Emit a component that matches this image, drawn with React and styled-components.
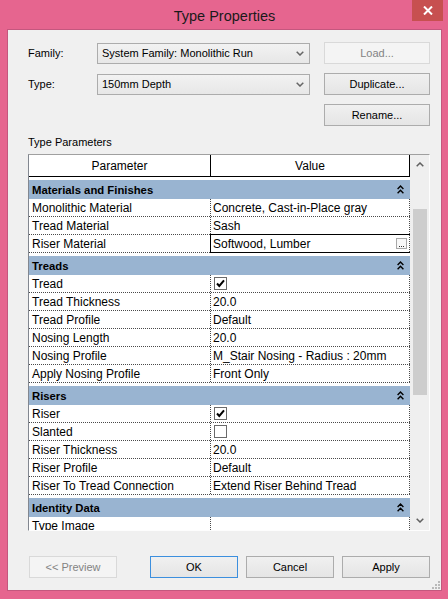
import React from 'react';
import styled, { createGlobalStyle } from 'styled-components';

const GlobalStyle = createGlobalStyle`
  html, body {
    margin: 0;
    padding: 0;
    overflow: hidden;
  }
  body {
    font-family: "Liberation Sans", Arial, sans-serif;
    color: #000;
  }
`;

var Window = styled.div`
  width: 448px;
  height: 599px;
  box-sizing: border-box;
  background: #e6658f;
  padding: 0 6px 8px 7px;
  display: flex;
  flex-direction: column;
`;

var TitleBar = styled.div`
  position: relative;
  height: 30px;
  padding-top: 2px;
  box-sizing: border-box;
  display: flex;
  align-items: center;
  justify-content: center;
  font-size: 14.5px;
  color: #1a1a1a;
`;

var CloseButton = styled.div`
  position: absolute;
  top: 0;
  right: -1px;
  width: 31px;
  height: 21px;
  background: #c75050;
  display: flex;
  align-items: center;
  justify-content: center;
`;

var Content = styled.div`
  position: relative;
  flex: 1;
  background: #f0f0f0;
  border: 1px solid #c4577e;
  padding: 12px 11px 12px 20px;
  display: flex;
  flex-direction: column;
  font-size: 11px;
`;

var TopGrid = styled.div`
  display: grid;
  grid-template-columns: 55px 213px 106px;
  grid-auto-rows: 22px;
  column-gap: 14px;
  row-gap: 9px;
  align-items: center;
`;

var Label = styled.div`
  font-size: 11px;
`;

var Select = styled.div`
  height: 21px;
  box-sizing: border-box;
  border: 1px solid #acacac;
  background: linear-gradient(#f2f2f2, #e7e7e7);
  display: flex;
  align-items: center;
  justify-content: space-between;
  padding: 0 5px 0 4px;
`;

var Button = styled.div`
  height: 22px;
  width: ${p => p.$width || 'auto'};
  box-sizing: border-box;
  border: 1px solid ${p => (p.$disabled ? '#d9d9d9' : p.$primary ? '#3c8fde' : '#acacac')};
  background: ${p => (p.$disabled ? '#f4f4f4' : 'linear-gradient(#f0f0f0, #e5e5e5)')};
  color: ${p => (p.$disabled ? '#838383' : '#000')};
  display: flex;
  align-items: center;
  justify-content: center;
  font-size: 11px;
  grid-column: ${p => p.$col || 'auto'};
`;

var SectionLabel = styled.div`
  margin-top: 9px;
  height: 14px;
  line-height: 14px;
  font-size: 11px;
`;

var Table = styled.div`
  margin-top: 5px;
  width: 402px;
  height: 377px;
  box-sizing: border-box;
  border-top: 1px solid #a0a0a0;
  border-left: 1px solid #828790;
  border-right: 1px solid #fdfdfd;
  border-bottom: 1px solid #fdfdfd;
  display: flex;
  overflow: hidden;
`;

var GridArea = styled.div`
  width: 381px;
  background: #fff;
  display: flex;
  flex-direction: column;
  overflow: hidden;
  font-size: 12px;
`;

var HeaderRow = styled.div`
  display: grid;
  grid-template-columns: 182px 199px;
  height: 22px;
  flex-shrink: 0;
  border-bottom: 1px solid #000;
  box-sizing: border-box;
`;

var HeaderCell = styled.div`
  border-right: 1px solid #000;
  display: flex;
  align-items: center;
  justify-content: center;
`;

var SectionHeader = styled.div`
  margin-top: 3px;
  height: 19px;
  flex-shrink: 0;
  background: #99b4d1;
  display: flex;
  align-items: center;
  justify-content: space-between;
  padding: 0 6px 0 3px;
  font-weight: bold;
  font-size: 11.3px;
`;

var Row = styled.div`
  display: grid;
  grid-template-columns: 182px 199px;
  height: 18px;
  flex-shrink: 0;
  box-sizing: border-box;
  border-bottom: 1px dotted #4a4a4a;
`;

var NameCell = styled.div`
  border-right: 1px dotted #4a4a4a;
  padding-left: 3px;
  display: flex;
  align-items: center;
  white-space: nowrap;
`;

var ValueCell = styled.div`
  border-right: 1px dotted #4a4a4a;
  padding-left: 2px;
  display: flex;
  align-items: center;
  justify-content: space-between;
  white-space: nowrap;
  outline: ${p => (p.$editing ? '1px solid #000' : 'none')};
`;

var Ellipsis = styled.div`
  width: 11px;
  height: 11px;
  box-sizing: border-box;
  margin-right: 2px;
  border: 1px solid #a8a8a8;
  background: #f8f8f8;
  display: flex;
  align-items: flex-end;
  justify-content: center;
  padding-bottom: 1px;
`;

var Dot = styled.span`
  width: 1px;
  height: 1px;
  margin: 0 0.5px;
  background: #333;
`;

var CheckBox = styled.div`
  width: 13px;
  height: 13px;
  box-sizing: border-box;
  margin-left: 1px;
  border: 1px solid #6a6a6a;
  background: #fff;
  display: flex;
  align-items: center;
  justify-content: center;
`;

var Scrollbar = styled.div`
  width: 19px;
  background: #efefef;
  display: flex;
  flex-direction: column;
`;

var ScrollArrow = styled.div`
  height: 19px;
  flex-shrink: 0;
  display: flex;
  align-items: center;
  justify-content: center;
`;

var ScrollTrack = styled.div`
  flex: 1;
`;

var Thumb = styled.div`
  margin-left: 3px;
  width: 14px;
  background: #cdcdcd;
`;

var BottomBar = styled.div`
  margin-top: 25px;
  display: flex;
  justify-content: space-between;
  padding-left: 1px;
`;

var ButtonGroup = styled.div`
  display: flex;
  gap: 8px;
`;

var Gripper = styled.svg`
  position: absolute;
  right: 0;
  bottom: 0;
`;

var sections = [
    { title: 'Materials and Finishes', rows: [
        { name: 'Monolithic Material', value: 'Concrete, Cast-in-Place gray' },
        { name: 'Tread Material', value: 'Sash' },
        { name: 'Riser Material', value: 'Softwood, Lumber', editing: true },
    ] },
    { title: 'Treads', rows: [
        { name: 'Tread', check: true },
        { name: 'Tread Thickness', value: '20.0' },
        { name: 'Tread Profile', value: 'Default' },
        { name: 'Nosing Length', value: '20.0' },
        { name: 'Nosing Profile', value: 'M_Stair Nosing - Radius : 20mm' },
        { name: 'Apply Nosing Profile', value: 'Front Only' },
    ] },
    { title: 'Risers', rows: [
        { name: 'Riser', check: true },
        { name: 'Slanted', check: false },
        { name: 'Riser Thickness', value: '20.0' },
        { name: 'Riser Profile', value: 'Default' },
        { name: 'Riser To Tread Connection', value: 'Extend Riser Behind Tread' },
    ] },
    { title: 'Identity Data', rows: [
        { name: 'Type Image', value: '' },
    ] },
];

var Chevron = ({ dir = 'down', color = '#666' }) => (
    <svg width="8" height="5" viewBox="0 0 8 5">
        <path d={dir === 'down' ? 'M0.7 0.7 L4 4 L7.3 0.7' : 'M0.7 4.3 L4 1 L7.3 4.3'}
            fill="none" stroke={color} strokeWidth="1.5" />
    </svg>
);

var Collapse = () => (
    <svg width="7" height="9" viewBox="0 0 7 9">
        <path d="M0.6 4 L3.5 1.1 L6.4 4 M0.6 8.2 L3.5 5.3 L6.4 8.2" fill="none" stroke="#000" strokeWidth="1.4" />
    </svg>
);

var Check = () => (
    <svg width="11" height="11" viewBox="0 0 11 11">
        <path d="M2 5.5 L4.3 8 L9 2.3" fill="none" stroke="#000" strokeWidth="2" />
    </svg>
);

var PropRow = ({ row }) => (
    <Row>
        <NameCell>{row.name}</NameCell>
        <ValueCell $editing={row.editing}>
            {row.check !== undefined
                ? <CheckBox>{row.check && <Check />}</CheckBox>
                : <span>{row.value}</span>}
            {row.editing && <Ellipsis><Dot /><Dot /><Dot /></Ellipsis>}
        </ValueCell>
    </Row>
);

var App = () => {
    return (
        <Window>
            <GlobalStyle />
            <TitleBar>
                Type Properties
                <CloseButton>
                    <svg width="10" height="9" viewBox="0 0 10 9">
                        <path d="M1 0.5 L9 8.5 M9 0.5 L1 8.5" stroke="#fff" strokeWidth="2" />
                    </svg>
                </CloseButton>
            </TitleBar>
            <Content>
                <TopGrid>
                    <Label>Family:</Label>
                    <Select>System Family: Monolithic Run<Chevron /></Select>
                    <Button $disabled>Load...</Button>
                    <Label>Type:</Label>
                    <Select>150mm Depth<Chevron /></Select>
                    <Button>Duplicate...</Button>
                    <Button $col="3">Rename...</Button>
                </TopGrid>
                <SectionLabel>Type Parameters</SectionLabel>
                <Table>
                    <GridArea>
                        <HeaderRow>
                            <HeaderCell>Parameter</HeaderCell>
                            <HeaderCell>Value</HeaderCell>
                        </HeaderRow>
                        {sections.map(s => (
                            <React.Fragment key={s.title}>
                                <SectionHeader>{s.title}<Collapse /></SectionHeader>
                                {s.rows.map(r => <PropRow key={r.name} row={r} />)}
                            </React.Fragment>
                        ))}
                    </GridArea>
                    <Scrollbar>
                        <ScrollArrow><Chevron dir="up" color="#606060" /></ScrollArrow>
                        <ScrollTrack>
                            <Thumb style={{ marginTop: 35, height: 186 }} />
                        </ScrollTrack>
                        <ScrollArrow><Chevron color="#606060" /></ScrollArrow>
                    </Scrollbar>
                </Table>
                <BottomBar>
                    <Button $width="88px" $disabled>&lt;&lt; Preview</Button>
                    <ButtonGroup>
                        <Button $width="88px" $primary>OK</Button>
                        <Button $width="88px">Cancel</Button>
                        <Button $width="88px">Apply</Button>
                    </ButtonGroup>
                </BottomBar>
                <Gripper width="9" height="9" viewBox="0 0 9 9">
                    {[[6, 0], [3, 3], [6, 3], [0, 6], [3, 6], [6, 6]].map(([x, y]) => (
                        <rect key={x + '-' + y} x={x} y={y} width="2" height="2" fill="#b9b9b9" />
                    ))}
                </Gripper>
            </Content>
        </Window>
    );
};

export default App;
